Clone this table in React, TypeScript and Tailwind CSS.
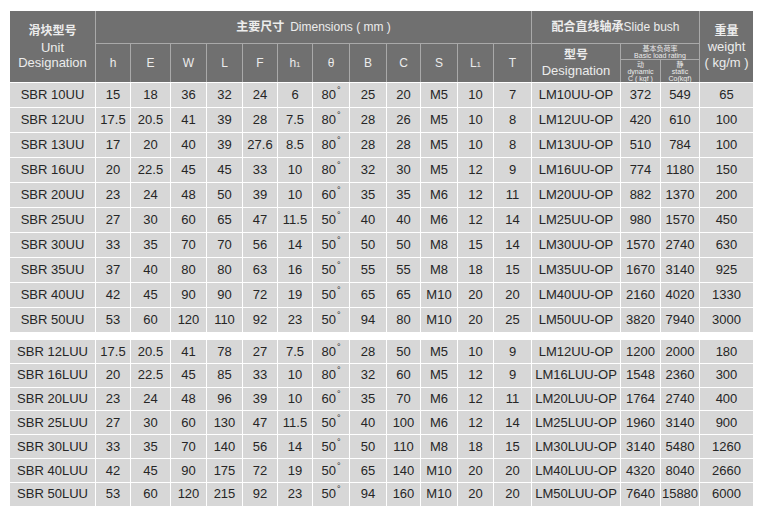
import React from 'react'

const COLS = 'grid-cols-[85px_34px_39px_35px_35px_34px_34px_36px_36px_33px_36px_35px_37px_88px_39px_38px_53px]'

const GROUP_A = [
  ['SBR 10UU', '15', '18', '36', '32', '24', '6', '80', '25', '20', 'M5', '10', '7', 'LM10UU-OP', '372', '549', '65'],
  ['SBR 12UU', '17.5', '20.5', '41', '39', '28', '7.5', '80', '28', '26', 'M5', '10', '8', 'LM12UU-OP', '420', '610', '100'],
  ['SBR 13UU', '17', '20', '40', '39', '27.6', '8.5', '80', '28', '28', 'M5', '10', '8', 'LM13UU-OP', '510', '784', '100'],
  ['SBR 16UU', '20', '22.5', '45', '45', '33', '10', '80', '32', '30', 'M5', '12', '9', 'LM16UU-OP', '774', '1180', '150'],
  ['SBR 20UU', '23', '24', '48', '50', '39', '10', '60', '35', '35', 'M6', '12', '11', 'LM20UU-OP', '882', '1370', '200'],
  ['SBR 25UU', '27', '30', '60', '65', '47', '11.5', '50', '40', '40', 'M6', '12', '14', 'LM25UU-OP', '980', '1570', '450'],
  ['SBR 30UU', '33', '35', '70', '70', '56', '14', '50', '50', '50', 'M8', '15', '14', 'LM30UU-OP', '1570', '2740', '630'],
  ['SBR 35UU', '37', '40', '80', '80', '63', '16', '50', '55', '55', 'M8', '18', '15', 'LM35UU-OP', '1670', '3140', '925'],
  ['SBR 40UU', '42', '45', '90', '90', '72', '19', '50', '65', '65', 'M10', '20', '20', 'LM40UU-OP', '2160', '4020', '1330'],
  ['SBR 50UU', '53', '60', '120', '110', '92', '23', '50', '94', '80', 'M10', '20', '25', 'LM50UU-OP', '3820', '7940', '3000'],
]

const GROUP_B = [
  ['SBR 12LUU', '17.5', '20.5', '41', '78', '27', '7.5', '80', '28', '50', 'M5', '10', '9', 'LM12UU-OP', '1200', '2000', '180'],
  ['SBR 16LUU', '20', '22.5', '45', '85', '33', '10', '80', '32', '60', 'M5', '12', '9', 'LM16LUU-OP', '1548', '2360', '300'],
  ['SBR 20LUU', '23', '24', '48', '96', '39', '10', '60', '35', '70', 'M6', '12', '11', 'LM20LUU-OP', '1764', '2740', '400'],
  ['SBR 25LUU', '27', '30', '60', '130', '47', '11.5', '50', '40', '100', 'M6', '12', '14', 'LM25LUU-OP', '1960', '3140', '900'],
  ['SBR 30LUU', '33', '35', '70', '140', '56', '14', '50', '50', '110', 'M8', '18', '15', 'LM30LUU-OP', '3140', '5480', '1260'],
  ['SBR 40LUU', '42', '45', '90', '175', '72', '19', '50', '65', '140', 'M10', '20', '20', 'LM40LUU-OP', '4320', '8040', '2660'],
  ['SBR 50LUU', '53', '60', '120', '215', '92', '23', '50', '94', '160', 'M10', '20', '20', 'LM50LUU-OP', '7640', '15880', '6000'],
]

const DIMS = ['h', 'E', 'W', 'L', 'F', 'h1', 'θ', 'B', 'C', 'S', 'L1', 'T']

function Sym({ s }: { s: string }) {
  if (s === 'h1' || s === 'L1') {
    return <span>{s[0]}<span className="text-[8px]">1</span></span>
  }
  return <span>{s}</span>
}

function Cell({ v, i }: { v: string; i: number }) {
  // θ 列带度数符号
  if (i === 7) {
    return (
      <div className="bg-[#d7d7d7] flex items-center justify-center">
        {v}<span className="text-[9px] -mt-[8px] ml-[1px]">°</span>
      </div>
    )
  }
  return <div className="bg-[#d7d7d7] flex items-center justify-center whitespace-nowrap">{v}</div>
}

function Rows({ rows, rowH }: { rows: string[][]; rowH: string }) {
  return (
    <div className={`grid ${COLS} ${rowH} gap-px bg-white text-[13px] text-[#262626]`}>
      {rows.map((r, ri) =>
        r.map((v, i) => <Cell key={`${ri}-${i}`} v={v} i={i} />)
      )}
    </div>
  )
}

export default function App() {
  const hd = 'bg-[#707070] flex items-center justify-center text-[#ececec]'
  return (
    <div
      className="w-[762px] h-[509px] bg-white pl-[10px] pt-[11px] overflow-hidden"
      style={{ fontFamily: '"Liberation Sans", "Noto Sans CJK SC", sans-serif' }}
    >
      <div className="w-[743px]">
        {/* ── 表头 ── */}
        <div className={`grid ${COLS} grid-rows-[32px_15px_22px] gap-px bg-[#a9a9a9] text-[13px] leading-none`}>
          <div className={`${hd} row-span-3 flex-col gap-[2px]`}>
            <span className="text-[12px] font-bold">滑块型号</span>
            <span className="mt-[2px]">Unit</span>
            <span>Designation</span>
          </div>
          <div className={`${hd} col-span-12 text-[12px]`}>
            <span className="font-bold mr-[6px]">主要尺寸</span>Dimensions ( mm )
          </div>
          <div className={`${hd} col-span-3 text-[12px]`}>
            <span className="font-bold">配合直线轴承</span>Slide bush
          </div>
          <div className={`${hd} row-span-3 flex-col gap-[3px]`}>
            <span className="text-[12px] font-bold">重量</span>
            <span>weight</span>
            <span>( kg/m )</span>
          </div>
          {DIMS.map(d => (
            <div key={d} className={`${hd} row-span-2 text-[12px]`}>
              <Sym s={d} />
            </div>
          ))}
          <div className={`${hd} row-span-2 flex-col gap-[3px]`}>
            <span className="text-[12px] font-bold">型号</span>
            <span>Designation</span>
          </div>
          <div className={`${hd} col-span-2 flex-col text-[7px] leading-[7px]`}>
            <span>基本负荷率</span>
            <span>Basic load rating</span>
          </div>
          <div className={`${hd} flex-col text-[7px] leading-[7px]`}>
            <span>动</span>
            <span>dynamic</span>
            <span>C ( kgf )</span>
          </div>
          <div className={`${hd} flex-col text-[7px] leading-[7px]`}>
            <span>静</span>
            <span>static</span>
            <span>Co(kgf)</span>
          </div>
        </div>

        {/* ── 数据 ── */}
        <div className="pt-px">
          <Rows rows={GROUP_A} rowH="auto-rows-[24px]" />
        </div>
        <div className="pt-[8px]">
          <Rows rows={GROUP_B} rowH="auto-rows-[22.8px]" />
        </div>
      </div>
    </div>
  )
}
